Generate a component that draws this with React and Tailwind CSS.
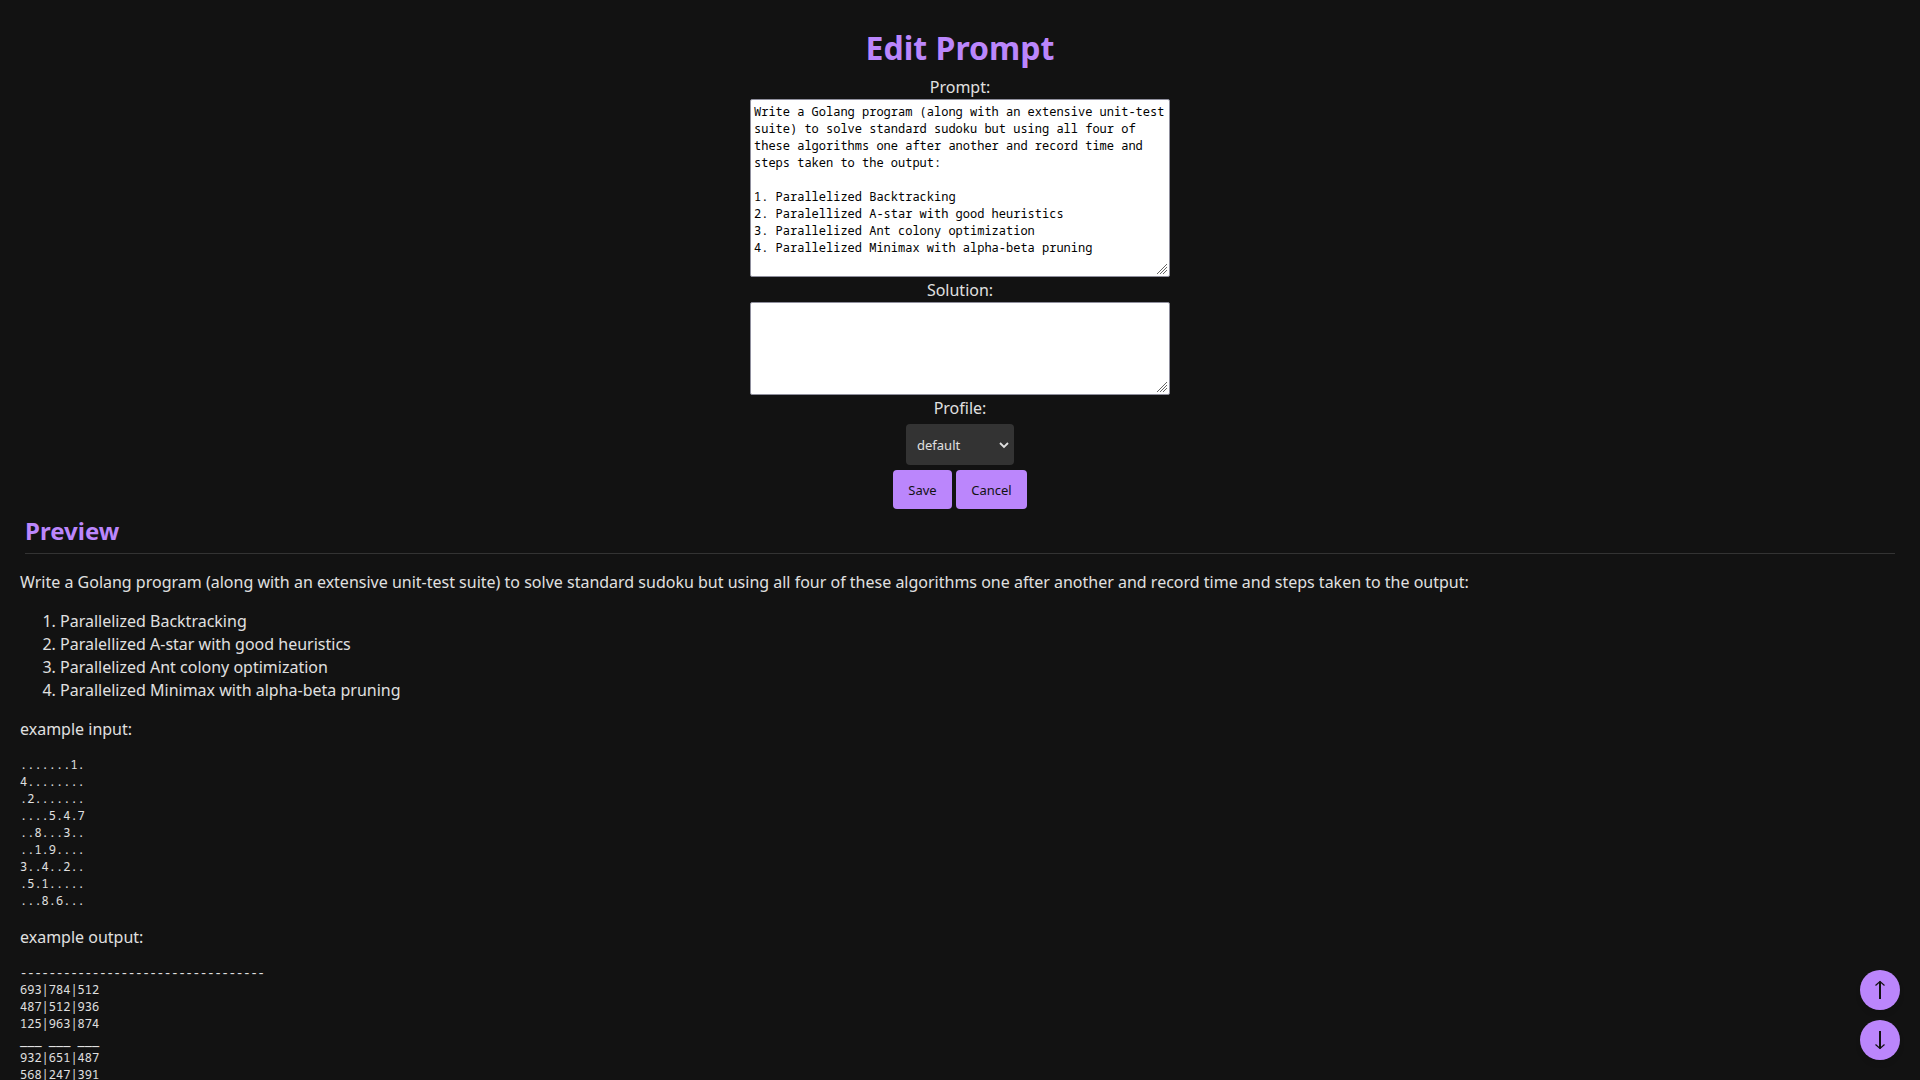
const PROMPT = `Write a Golang program (along with an extensive unit-test suite) to solve standard sudoku but using all four of these algorithms one after another and record time and steps taken to the output:

1. Parallelized Backtracking
2. Paralellized A-star with good heuristics
3. Parallelized Ant colony optimization
4. Parallelized Minimax with alpha-beta pruning
`;

const STEPS = [
  "Parallelized Backtracking",
  "Paralellized A-star with good heuristics",
  "Parallelized Ant colony optimization",
  "Parallelized Minimax with alpha-beta pruning",
];

const EXAMPLE_INPUT = `.......1.
4........
.2.......
....5.4.7
..8...3..
..1.9....
3..4..2..
.5.1.....
...8.6...`;

const EXAMPLE_OUTPUT = `----------------------------------
693|784|512
487|512|936
125|963|874
___ ___ ___
932|651|487
568|247|391`;

function Editor({ id, label, value, height }) {
  return (
    <>
      <label htmlFor={id} className="leading-[23px]">{label}</label>
      <div className="relative mb-[2px] w-[420px] max-w-full">
        <textarea
          id={id}
          defaultValue={value}
          className={"block w-full resize rounded-[2px] border border-[#8f8f9d] bg-white px-[3px] py-[3px] font-['Noto_Sans_Mono','DejaVu_Sans_Mono',monospace] text-[12px] leading-[17px] text-black [scrollbar-width:none] [&::-webkit-resizer]:hidden " + height}
        />
        <svg className="pointer-events-none absolute right-[3px] bottom-[3px]" width="10" height="10" viewBox="0 0 10 10" stroke="#666" strokeWidth="1" aria-hidden="true">
          <path d="M0 10 10 0M3 10 10 3M6 10l4-4" />
        </svg>
      </div>
    </>
  );
}

function JumpButton({ label, children }) {
  return (
    <button type="button" aria-label={label} className="flex size-10 items-center justify-center rounded-full bg-[#bb86fc] text-[#121212] shadow-md">
      {children}
    </button>
  );
}

export default function App() {
  return (
    <div className="h-screen overflow-y-auto bg-[#121212] px-5 font-['Noto_Sans',sans-serif] text-[16px] leading-[23px] text-[#e0e0e0] [scrollbar-width:none]">
      <form className="flex flex-col items-center pt-5" onSubmit={(e) => e.preventDefault()}>
        <h1 className="py-1 text-[32px] leading-[48px] font-bold text-[#bb86fc]">Edit Prompt</h1>
        <Editor id="prompt" label="Prompt:" value={PROMPT} height="h-[178px]" />
        <Editor id="solution" label="Solution:" value="" height="h-[93px]" />
        <label htmlFor="profile" className="leading-[23px]">Profile:</label>
        <div className="relative mt-1">
          <select id="profile" className="block h-[41px] w-[108px] appearance-none rounded-[4px] bg-[#333] px-[11px] pt-px text-[13px] text-[#e0e0e0]">
            <option>default</option>
          </select>
          <svg className="pointer-events-none absolute top-[18px] right-[5px]" width="10" height="7" viewBox="0 0 10 7" fill="none" stroke="#e0e0e0" strokeWidth="1.8" aria-hidden="true">
            <path d="M1 1l4 4 4-4" />
          </svg>
        </div>
        <div className="mt-[5px] flex gap-1">
          <button type="submit" className="h-[39px] w-[59px] rounded-[4px] bg-[#bb86fc] pt-px text-[13px] text-[#121212]">Save</button>
          <button type="button" className="h-[39px] w-[71px] rounded-[4px] bg-[#bb86fc] pt-px text-[13px] text-[#121212]">Cancel</button>
        </div>
      </form>
      <section>
        <h2 className="mx-[5px] mt-[5px] border-b border-[#333] pb-[6px] text-[24px] leading-[33px] font-bold text-[#bb86fc]">Preview</h2>
        <p className="mt-[17px]">Write a Golang program (along with an extensive unit-test suite) to solve standard sudoku but using all four of these algorithms one after another and record time and steps taken to the output:</p>
        <ol className="my-4 list-decimal pl-10">
          {STEPS.map((s) => <li key={s}>{s}</li>)}
        </ol>
        <p>example input:</p>
        <pre className="mt-[15px] mb-[17px] font-['Noto_Sans_Mono','DejaVu_Sans_Mono',monospace] text-[12px] leading-[17px]">{EXAMPLE_INPUT}</pre>
        <p>example output:</p>
        <pre className="mt-[15px] mb-[17px] font-['Noto_Sans_Mono','DejaVu_Sans_Mono',monospace] text-[12px] leading-[17px]">{EXAMPLE_OUTPUT}</pre>
      </section>
      <nav className="fixed right-5 bottom-5 flex flex-col gap-[10px]">
        <JumpButton label="Scroll to top">
          <svg width="12" height="20" viewBox="0 0 12 20" fill="none" stroke="currentColor" aria-hidden="true">
            <path d="M6 19V1.500" strokeWidth="2" />
            <path d="M1.500 5.500 6 1.500l4.500 4" strokeWidth="1.200" />
          </svg>
        </JumpButton>
        <JumpButton label="Scroll to bottom">
          <svg width="12" height="20" viewBox="0 0 12 20" fill="none" stroke="currentColor" aria-hidden="true">
            <path d="M6 1v17.500" strokeWidth="2" />
            <path d="M1.500 14.500 6 18.500l4.500-4" strokeWidth="1.200" />
          </svg>
        </JumpButton>
      </nav>
    </div>
  );
}
